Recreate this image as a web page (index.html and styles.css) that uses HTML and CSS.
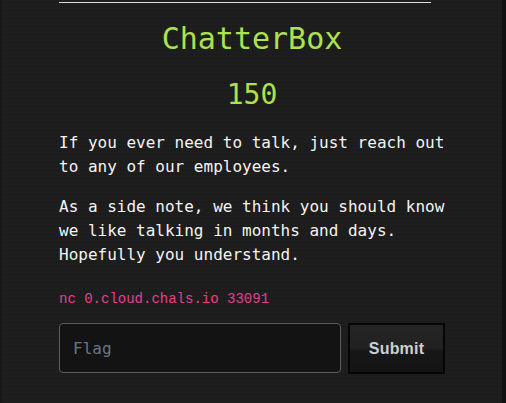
FILE: index.html
```html
<!DOCTYPE html>
<html lang="en">
<head>
<meta charset="utf-8">
<title>ChatterBox</title>
<link rel="stylesheet" href="styles.css">
</head>
<body>
<div class="page">
  <div class="modal-body">
    <div class="rule"></div>
    <h3 class="challenge-name">ChatterBox</h3>
    <h4 class="challenge-value">150</h4>
    <div class="challenge-desc">
      <p>If you ever need to talk, just reach out to any of our employees.</p>
      <p>As a side note, we think you should know we like talking in months and days. Hopefully you understand.</p>
      <p class="conn"><code>nc 0.cloud.chals.io 33091</code></p>
    </div>
    <form class="submit-row">
      <input class="flag-input" type="text" placeholder="Flag">
      <button class="submit-btn" type="button">Submit</button>
    </form>
  </div>
</div>
</body>
</html>
```
FILE: styles.css
```css
html, body {
  margin: 0;
  padding: 0;
  height: 100%;
}
body {
  background: #111;
  font-family: "DejaVu Sans Mono", monospace;
  color: #f2f2f2;
}
.page {
  height: 100%;
  margin-right: 4px;
  border-left: 2px solid #171717;
  background-color: #1c1c1c;
  background-image:
    linear-gradient(rgba(255,255,255,0.006) 1px, transparent 1px),
    linear-gradient(90deg, rgba(255,255,255,0.006) 1px, transparent 1px);
  background-size: 4px 4px;
  box-sizing: border-box;
  padding-top: 2px;
}
.modal-body {
  width: 386px;
  margin-left: 57px;
}
.rule {
  width: 372px;
  height: 1px;
  background: #dcdcdc;
}
.challenge-name {
  margin: 18px 0 0;
  font-size: 30px;
  line-height: 36px;
  font-weight: normal;
  color: #ade24e;
  text-align: center;
}
.challenge-value {
  margin: 21px 0 0;
  font-size: 28px;
  line-height: 34px;
  font-weight: normal;
  color: #ade24e;
  text-align: center;
}
.challenge-desc {
  margin-top: 19px;
}
.challenge-desc p {
  margin: 0 0 16px;
  font-size: 16px;
  line-height: 24px;
  color: #f4f4f4;
}
.challenge-desc p.conn {
  margin: 20px 0 0;
  line-height: 21px;
}
.conn code {
  font-family: "Liberation Mono", monospace;
  font-size: 14px;
  color: #e83e8c;
}
.submit-row {
  display: flex;
  gap: 7px;
  margin-top: 13px;
  align-items: flex-start;
}
.flag-input {
  width: 282px;
  height: 50px;
  box-sizing: border-box;
  background: #131313;
  border: 1px solid #5c5c5c;
  border-radius: 4px;
  padding: 0 13px;
  font-family: "DejaVu Sans Mono", monospace;
  font-size: 16px;
  color: #ddd;
  outline: none;
}
.flag-input::placeholder {
  color: #6a7682;
}
.submit-btn {
  width: 97px;
  height: 51px;
  box-sizing: border-box;
  border: 2px solid #060606;
  border-radius: 0;
  background: linear-gradient(to bottom, #252525 0%, #212121 48%, #171717 56%, #141414 100%);
  color: #cdd0d4;
  font-family: "Liberation Sans", Arial, sans-serif;
  font-weight: bold;
  font-size: 16px;
  letter-spacing: 0.2px;
  padding: 0;
}
```
